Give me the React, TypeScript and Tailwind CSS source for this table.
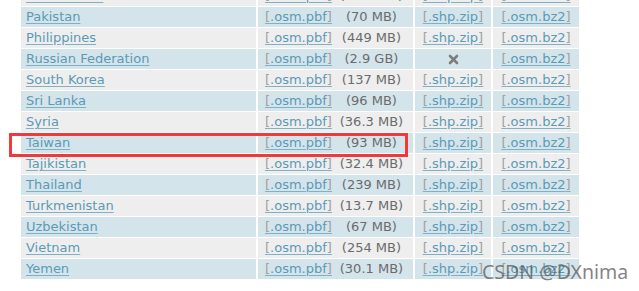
import React from "react";

type Row = { name: string; size: string; shp: boolean };

const rows: Row[] = [
  { name: "North Korea", size: "(10.1 MB)", shp: true },
  { name: "Pakistan", size: "(70 MB)", shp: true },
  { name: "Philippines", size: "(449 MB)", shp: true },
  { name: "Russian Federation", size: "(2.9 GB)", shp: false },
  { name: "South Korea", size: "(137 MB)", shp: true },
  { name: "Sri Lanka", size: "(96 MB)", shp: true },
  { name: "Syria", size: "(36.3 MB)", shp: true },
  { name: "Taiwan", size: "(93 MB)", shp: true },
  { name: "Tajikistan", size: "(32.4 MB)", shp: true },
  { name: "Thailand", size: "(239 MB)", shp: true },
  { name: "Turkmenistan", size: "(13.7 MB)", shp: true },
  { name: "Uzbekistan", size: "(67 MB)", shp: true },
  { name: "Vietnam", size: "(254 MB)", shp: true },
  { name: "Yemen", size: "(30.1 MB)", shp: true },
];

function Bracketed({ text }: { text: string }) {
  return (
    <a className="text-[#5b9ab6] underline decoration-[#7fb0c6] underline-offset-[2px] cursor-pointer">
      <span className="text-[#a0a0a0]">[</span>
      {text}
      <span className="text-[#a0a0a0]">]</span>
    </a>
  );
}

function Cross() {
  return (
    <svg width="11" height="11" viewBox="0 0 11 11">
      <path d="M2 2 L9 9 M9 2 L2 9" stroke="#7d7d7d" strokeWidth="2.6" strokeLinecap="round" />
    </svg>
  );
}

export default function App() {
  return (
    <div
      className="relative w-[639px] h-[291px] overflow-hidden bg-white"
      style={{ fontFamily: '"DejaVu Sans", Verdana, sans-serif' }}
    >
      <div className="ml-[21px] mt-[-14px] grid grid-cols-[235px_155px_76px_86px] gap-x-[2px] gap-y-[1px] text-[13px] leading-[20px]">
        {rows.map((r, i) => {
          const bg = i % 2 === 0 ? "bg-[#eeeeee]" : "bg-[#d4e4eb]";
          return (
            <React.Fragment key={r.name}>
              <div className={`${bg} h-[20px] pl-[5px] flex items-center`}>
                <a className="text-[#5b9ab6] underline decoration-[#7fb0c6] underline-offset-[2px] cursor-pointer whitespace-nowrap">
                  {r.name}
                </a>
              </div>
              <div className={`${bg} h-[20px] pl-[7px] flex items-center whitespace-nowrap`}>
                <Bracketed text=".osm.pbf" />
                <span className="flex-1 text-center pr-[2px] text-[#6b6b6b]">{r.size}</span>
              </div>
              <div className={`${bg} h-[20px] flex items-center justify-center whitespace-nowrap`}>
                {r.shp ? <Bracketed text=".shp.zip" /> : <Cross />}
              </div>
              <div className={`${bg} h-[20px] flex items-center justify-center whitespace-nowrap`}>
                <Bracketed text=".osm.bz2" />
              </div>
            </React.Fragment>
          );
        })}
      </div>

      <div className="absolute left-[9px] top-[133px] w-[399px] h-[24px] border-[3px] border-[#f03a3a]" />

      <div
        className="absolute left-[482px] top-[259px] text-[19.5px] leading-[26px] text-[#5a5a5a]/75 whitespace-nowrap"
        style={{ fontFamily: '"Noto Sans", sans-serif' }}
      >
        CSDN @DXnima
      </div>
    </div>
  );
}
